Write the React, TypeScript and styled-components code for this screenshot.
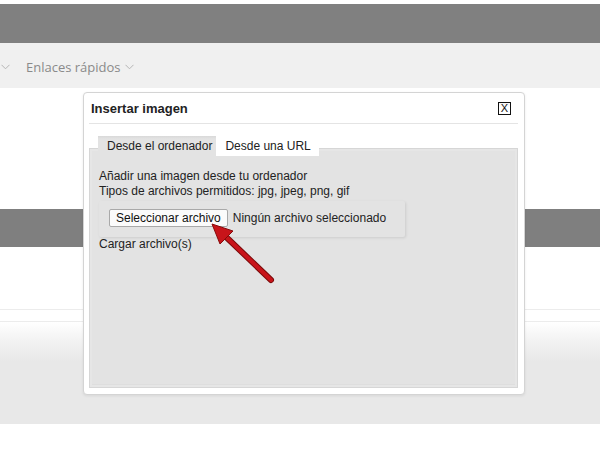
import React from 'react';
import styled, { createGlobalStyle } from 'styled-components';

const GlobalStyle = createGlobalStyle`
  html, body {
    margin: 0;
    padding: 0;
    background: #fff;
  }
  body {
    font-family: "Liberation Sans", Arial, sans-serif;
  }
`;

const Page = styled.div`
  position: relative;
  width: 600px;
  height: 468px;
  overflow: hidden;
  background: #fff;
`;

const TopStrip = styled.div`
  height: 4px;
  background: #fff;
`;

const Header = styled.div`
  height: 39px;
  background: #808080;
`;

const Nav = styled.nav`
  height: 45px;
  background: #f0f0f0;
  display: flex;
  align-items: center;
  padding-left: 1px;
  padding-top: 2px;
  box-sizing: border-box;
`;

const NavItem = styled.span`
  display: flex;
  align-items: center;
  gap: 4px;
  margin-left: 16px;
  font-family: "Open Sans", "Noto Sans", sans-serif;
  font-size: 13px;
  color: #8a8a8a;
`;

const Band = styled.div<{ $h: number; $bg?: string }>`
  height: ${p => p.$h}px;
  background: ${p => p.$bg || '#fff'};
`;

const Footer = styled.div`
  height: 102px;
  background: linear-gradient(#fff 0, #f3f3f3 18px, #e8e8e8 40px, #e8e8e8 100%);
`;

const Dialog = styled.div`
  position: absolute;
  left: 83px;
  top: 92px;
  width: 442px;
  height: 303px;
  box-sizing: border-box;
  background: #fff;
  border: 1px solid #d4d4d4;
  border-radius: 4px;
  box-shadow: 0 1px 3px rgba(0, 0, 0, 0.08);
  padding: 0 6px 6px 5px;
  display: flex;
  flex-direction: column;
`;

const TitleBar = styled.div`
  height: 30px;
  display: flex;
  align-items: center;
  justify-content: space-between;
  padding: 0 7px 0 2px;
  border-bottom: 1px solid #e4e4e4;
`;

const Title = styled.span`
  font-size: 13px;
  font-weight: bold;
  color: #222;
`;

const CloseBox = styled.span`
  width: 13px;
  height: 13px;
  box-sizing: border-box;
  border: 1px solid #111;
  background: linear-gradient(#f4f4f4, #fff 40%);
  display: flex;
  align-items: center;
  justify-content: center;
  font-size: 11px;
  line-height: 1;
  color: #111;
`;

const Tabs = styled.div`
  display: flex;
  margin-top: 12px;
  margin-bottom: -8px;
  padding-left: 9px;
  position: relative;
  z-index: 1;
`;

const Tab = styled.span<{ $active?: boolean }>`
  height: 20px;
  line-height: 20px;
  padding: ${p => (p.$active ? '0 4px 0 9px' : '0 8px 0 9px')};
  font-size: 12px;
  color: #222;
  background: ${p => (p.$active ? 'linear-gradient(#d9d9d9, #e3e3e3 3px)' : '#fff')};
`;

const Panel = styled.div`
  flex: 1;
  background: #e3e3e3;
  border: 1px solid #d6d6d6;
  box-shadow: inset 0 0 0 2px #e6e6e6, inset 0 -3px 0 #dedede;
  padding: 20px 9px 0;
  font-size: 12px;
  line-height: 15px;
  color: #222;
`;

const Line = styled.div``;

const FileBox = styled.div`
  width: 306px;
  height: 36px;
  box-sizing: border-box;
  margin-top: 2px;
  padding: 8px 0 0 10px;
  display: flex;
  align-items: flex-start;
  gap: 5px;
  box-shadow: 1px 1px 3px rgba(0, 0, 0, 0.1);
  border-radius: 2px;
`;

const FileButton = styled.button`
  height: 18px;
  padding: 0 6px;
  font-family: "Liberation Sans", Arial, sans-serif;
  font-size: 12px;
  line-height: 16px;
  color: #111;
  background: #fbfbfb;
  border: 1px solid #a9a9a9;
  border-radius: 2px;
`;

const FileLabel = styled.span`
  line-height: 18px;
`;

const Overlay = styled.svg`
  position: absolute;
  left: 0;
  top: 0;
  pointer-events: none;
`;

function Chevron() {
  return (
    <svg width="9" height="6" viewBox="0 0 9 6">
      <path d="M0.5 0.8 L4.5 4.8 L8.5 0.8" fill="none" stroke="#b5b5b5" strokeWidth="1" />
    </svg>
  );
}

export default function App() {
  return (
    <Page>
      <GlobalStyle />
      <TopStrip />
      <Header />
      <Nav>
        <Chevron />
        <NavItem>
          Enlaces rápidos
          <Chevron />
        </NavItem>
      </Nav>
      <Band $h={121} />
      <Band $h={38} $bg="#7f7f7f" />
      <Band $h={62} />
      <Band $h={1} $bg="#ececec" />
      <Band $h={11} />
      <Band $h={1} $bg="#ececec" />
      <Footer />

      <Dialog>
        <TitleBar>
          <Title>Insertar imagen</Title>
          <CloseBox>X</CloseBox>
        </TitleBar>
        <Tabs>
          <Tab $active>Desde el ordenador</Tab>
          <Tab>Desde una URL</Tab>
        </Tabs>
        <Panel>
          <Line>Añadir una imagen desde tu ordenador</Line>
          <Line>Tipos de archivos permitidos: jpg, jpeg, png, gif</Line>
          <FileBox>
            <FileButton>Seleccionar archivo</FileButton>
            <FileLabel>Ningún archivo seleccionado</FileLabel>
          </FileBox>
          <Line>Cargar archivo(s)</Line>
        </Panel>
      </Dialog>

      <Overlay width="600" height="468" viewBox="0 0 600 468">
        <line x1="271" y1="280" x2="224" y2="235" stroke="#7a0a0a" strokeWidth="6" strokeLinecap="round" />
        <line x1="271" y1="280" x2="224" y2="235" stroke="#c8141a" strokeWidth="4" strokeLinecap="round" />
        <polygon points="212,224 233,231 220,244" fill="#c8141a" stroke="#860b0b" strokeWidth="1" strokeLinejoin="round" />
      </Overlay>
    </Page>
  );
}
